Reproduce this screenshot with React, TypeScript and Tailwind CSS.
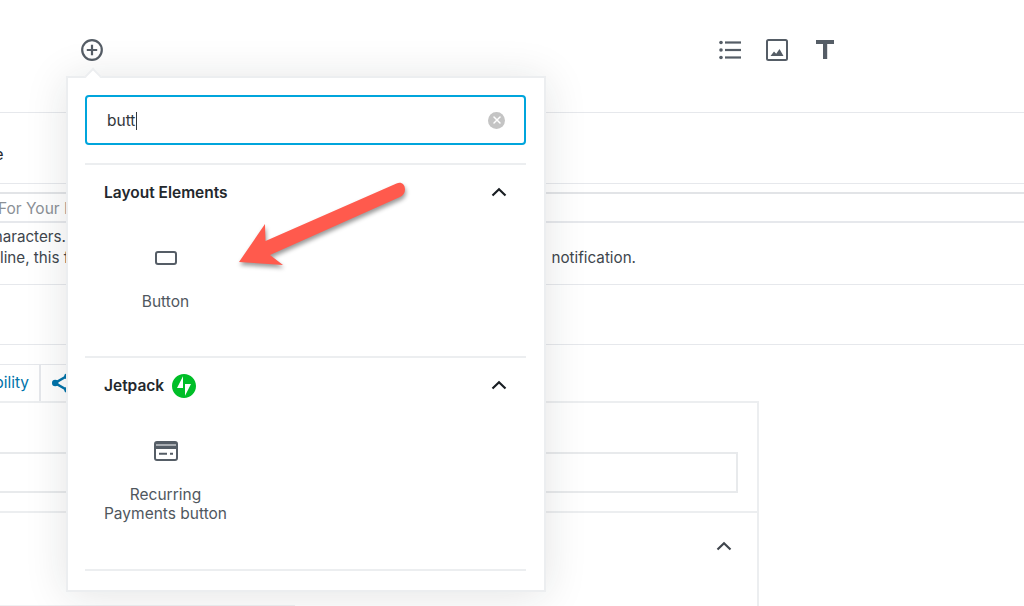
import { X } from "lucide-react";

const ChevronUp = ({ className }: { className: string }) => (
    <svg viewBox="0 0 16 10" className={className} fill="none" stroke="currentColor" strokeWidth="2.2">
        <path d="M1.5 8.5 8 2.2l6.5 6.3" />
    </svg>
);

function BlockItem({ icon, label }: { icon: React.ReactNode; label: React.ReactNode }) {
    return (
        <div className="flex w-[161px] flex-col items-center text-center">
            <div className="flex h-6 items-center justify-center">{icon}</div>
            <div className="mt-[22px] text-[15.5px] leading-[19px] text-[#50575e]">{label}</div>
        </div>
    );
}

function Section({ title, badge, children, height }: { title: string; badge?: React.ReactNode; children: React.ReactNode; height: string }) {
    return (
        <div className={`border-t-2 border-[#eceef0] ${height}`}>
            <div className="flex h-[56px] items-center justify-between pl-[19px] pr-[19px]">
                <div className="flex items-center gap-2 text-[15.5px] font-semibold text-[#23282d]">
                    {title}
                    {badge}
                </div>
                <ChevronUp className="-mt-[2px] h-[10px] w-[16px] text-[#191e23]" />
            </div>
            <div className="pt-[25px]">{children}</div>
        </div>
    );
}

export default function App() {
    return (
        <div className="relative h-[606px] w-[1024px] overflow-hidden bg-white font-['Inter','Liberation_Sans',sans-serif] text-[#40464d]">
            {/* toolbar */}
            <div className="flex h-[113px] items-start border-b border-[#e6e8ec] pt-[39px]">
                <svg viewBox="0 0 22 22" className="ml-[81px] h-[22px] w-[22px] text-[#555d66]" fill="none" stroke="currentColor">
                    <circle cx="11" cy="11" r="9.8" strokeWidth="2.2" />
                    <path d="M11 5.8v10.4M5.8 11h10.4" strokeWidth="2.2" />
                </svg>
                <svg viewBox="0 0 22 20" className="ml-[616px] mt-[1px] h-5 w-[22px] text-[#555d66]" fill="currentColor">
                    <circle cx="2" cy="2.5" r="1.8" />
                    <circle cx="2" cy="10" r="1.8" />
                    <circle cx="2" cy="17.5" r="1.8" />
                    <rect x="6" y="1.4" width="16" height="2.2" />
                    <rect x="6" y="8.9" width="16" height="2.2" />
                    <rect x="6" y="16.4" width="16" height="2.2" />
                </svg>
                <svg viewBox="0 0 22 22" className="ml-[25px] h-[22px] w-[22px] text-[#555d66]" fill="none">
                    <rect x="1" y="1" width="20" height="20" rx="1.5" stroke="currentColor" strokeWidth="2" />
                    <path d="M4.5 17 8 12.5l2.2 2.2L13.5 10l4 7z" fill="currentColor" />
                </svg>
                <svg viewBox="0 0 18 20" className="ml-[28px] h-5 w-[18px] text-[#555d66]" fill="currentColor">
                    <path d="M0 1h18v4h-6.8v15H7V5H0z" />
                </svg>
            </div>
            {/* title row */}
            <div className="flex h-[71px] items-center border-b border-[#e6e8ec] pt-[13px] text-[15.5px]">
                <span className="-ml-[28px] text-[#23282d]">Title</span>
            </div>
            <div className="h-[10px] border-b-2 border-[#e2e4e7]"></div>
            <div className="flex h-[29px] items-center border-b-2 border-[#e6e8ec] pt-[3px] text-[15.5px] text-[#8b9096]">
                <span className="-ml-[2px] whitespace-nowrap">For Your Message</span>
            </div>
            <div className="h-[62px] border-b border-[#e6e8ec] pt-[3px] text-[15.2px] leading-[21px]">
                <div className="-ml-[15px] whitespace-nowrap">characters.</div>
                <div className="flex w-[636px] justify-between whitespace-nowrap">
                    <span>line, this f</span>
                    <span>notification.</span>
                </div>
            </div>
            <div className="h-[60px] border-b border-[#e6e8ec]"></div>
            {/* tabs */}
            <div className="flex h-[56px] items-end">
                <div className="flex h-[37px] w-[41px] items-center justify-end overflow-hidden border-r-2 border-t border-[#e6e8ec] pr-[10px] text-[15.5px] text-[#0073aa]">bility</div>
                <div className="flex h-[37px] items-center border-t border-[#e6e8ec] pl-[11px]">
                    <svg viewBox="0 0 18 20" className="h-5 w-[18px] text-[#0073aa]" fill="none" stroke="currentColor" strokeWidth="2.6">
                        <path d="m15 3-12 7 12 7" />
                        <circle cx="15" cy="3.2" r="2.8" fill="currentColor" stroke="none" />
                        <circle cx="3.2" cy="10" r="3.2" fill="currentColor" stroke="none" />
                        <circle cx="15" cy="16.8" r="2.8" fill="currentColor" stroke="none" />
                    </svg>
                </div>
            </div>
            {/* settings panel */}
            <div className="flex h-[206px] w-[759px] flex-col border-r-2 border-t-2 border-[#eceef0]">
                <div className="h-[110px] border-b-2 border-[#eceef0] pr-[19px] pt-[49px]">
                    <div className="h-[41px] border-2 border-l-0 border-[#e8eaec]"></div>
                </div>
                <div className="flex flex-1 justify-end pr-[25px] pt-[28px]">
                    <ChevronUp className="h-[10px] w-[16px] text-[#40464d]" />
                </div>
                <div className="h-[2px] w-[295px] bg-[#f0f0f2]"></div>
            </div>

            {/* inserter popover */}
            <div className="absolute left-[66px] top-[76px] h-[516px] w-[480px] border-2 border-[#eceef0] bg-white pl-[17px] pr-[18px] pt-[17px] shadow-[0_3px_40px_rgba(25,30,35,0.12)]">
                <div className="absolute -top-[8px] left-[19px] h-[12px] w-[12px] rotate-45 border-l-2 border-t-2 border-[#eceef0] bg-white"></div>
                <div className="flex h-[50px] items-center justify-between rounded-[4px] border-2 border-[#00a5dc] pl-5 pr-[19px]">
                    <div className="flex items-center pt-px text-[15.5px] text-[#32373c]">
                        butt
                        <span className="ml-px h-[18px] w-px bg-[#32373c]"></span>
                    </div>
                    <div className="flex h-[17px] w-[17px] items-center justify-center rounded-full bg-[#c4c4c4]">
                        <X className="h-3 w-3 text-white" strokeWidth={3} />
                    </div>
                </div>
                <div className="mt-[18px]">
                    <Section title="Layout Elements" height="h-[193px]">
                        <BlockItem
                            label="Button"
                            icon={
                                <svg viewBox="0 0 22 14" className="h-[14px] w-[22px] text-[#555d66]" fill="none" stroke="currentColor" strokeWidth="2">
                                    <rect x="1" y="1" width="20" height="12" rx="2" />
                                </svg>
                            }
                        />
                    </Section>
                    <Section
                        title="Jetpack"
                        height="h-[213px]"
                        badge={
                            <svg viewBox="0 0 24 24" className="h-6 w-6 text-[#00be28]" fill="currentColor">
                                <path d="M12 0C5.4 0 0 5.4 0 12s5.4 12 12 12 12-5.4 12-12S18.6 0 12 0zm-1 14H5l6-11.7zm2 7.7V10h6z" fillRule="evenodd" />
                            </svg>
                        }
                    >
                        <BlockItem
                            label={
                                <>
                                    Recurring
                                    <br />
                                    Payments button
                                </>
                            }
                            icon={
                                <svg viewBox="0 0 24 20" className="h-5 w-6 text-[#555d66]" fill="currentColor">
                                    <path fillRule="evenodd" d="M3 0h18a3 3 0 0 1 3 3v14a3 3 0 0 1-3 3H3a3 3 0 0 1-3-3V3a3 3 0 0 1 3-3zM2 8v9c0 .6.4 1 1 1h18c.6 0 1-.4 1-1V8zm3 3.8h8v2H5zm11 0h3v2h-3zM2 3.4v1h20v-1z" />
                                </svg>
                            }
                        />
                    </Section>
                </div>
                <div className="border-t-2 border-[#eceef0]"></div>
            </div>

            {/* annotation arrow */}
            <svg viewBox="0 0 1024 606" className="pointer-events-none absolute left-0 top-0 h-[606px] w-[1024px] drop-shadow-[1px_3px_2px_rgba(0,0,0,0.4)]">
                <path d="M239 262 265 224 265.5 241 396.5 183.5C401 181.5 405 184 405 189.5 405 193 403 195.5 400 197L270 255 283 265Z" fill="#ff5a4d" />
            </svg>
        </div>
    );
}
